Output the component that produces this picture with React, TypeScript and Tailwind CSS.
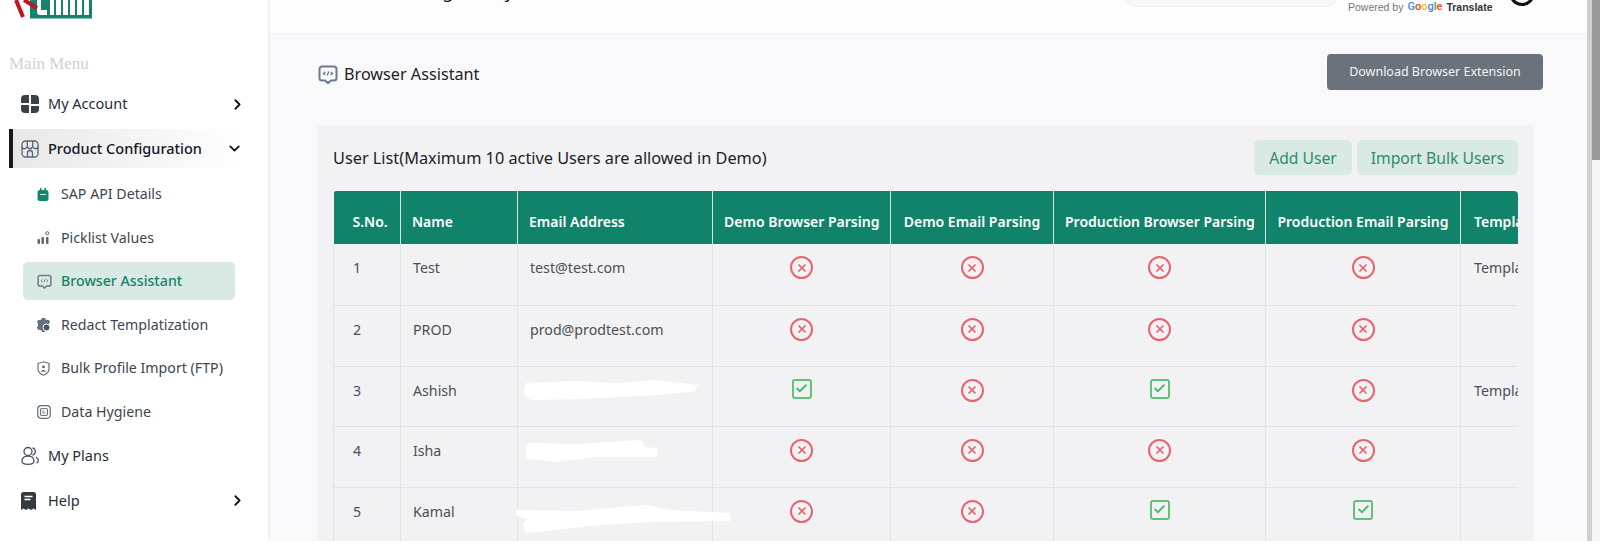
import { Check, ChevronDown, ChevronRight, X } from 'lucide-react';
import type { ReactNode } from 'react';

type Row = { id: number; name: string; email?: string; blob?: 'a' | 'b' | 'c'; flags: boolean[]; template?: string };

const rows: Row[] = [
  { id: 1, name: 'Test', email: 'test@test.com', flags: [false, false, false, false], template: 'Template 1' },
  { id: 2, name: 'PROD', email: 'prod@prodtest.com', flags: [false, false, false, false] },
  { id: 3, name: 'Ashish', blob: 'a', flags: [true, false, true, false], template: 'Template 1' },
  { id: 4, name: 'Isha', blob: 'b', flags: [false, false, false, false] },
  { id: 5, name: 'Kamal', blob: 'c', flags: [false, false, true, true] },
];

const columns = ['Demo Browser Parsing', 'Demo Email Parsing', 'Production Browser Parsing', 'Production Email Parsing'];

function ChatCodeIcon({ className }: { className?: string }) {
  return (
    <svg viewBox="0 0 20 20" className={className} fill="none" stroke="#6b7a8c" strokeWidth="2">
      <path d="M4 2h12a2.5 2.5 0 0 1 2.5 2.5v9A2.5 2.5 0 0 1 16 16h-3l-3 2.6L7 16H4a2.5 2.5 0 0 1-2.5-2.5v-9A2.5 2.5 0 0 1 4 2Z" />
      <path d="M7.2 7.4 5.4 9l1.8 1.6M12.8 7.4 14.6 9l-1.8 1.6M10.8 7 9.2 11" strokeWidth="1.3" />
    </svg>
  );
}

function Status({ ok }: { ok: boolean }) {
  if (ok) {
    return (
      <span className="mx-auto flex h-[20px] w-[20px] items-center justify-center rounded-[3px] border-2 border-[#62c27a] text-[#4fb96c]">
        <Check size={13} strokeWidth={3.5} />
      </span>
    );
  }
  return (
    <span className="mx-auto flex h-[23px] w-[23px] items-center justify-center rounded-full border-2 border-[#e7646f] text-[#e7646f]">
      <X size={12} strokeWidth={3.5} />
    </span>
  );
}

// white scribble the screenshot has over the real addresses
function Redaction({ kind }: { kind: 'a' | 'b' | 'c' }) {
  if (kind === 'a') {
    return (
      <svg viewBox="0 0 175 20" className="absolute top-[13px] left-[6px] h-[20px] w-[175px]">
        <path d="M2 3 50 1l46 2 34-3 44 5-3 7-54 4-60 3-50 1-8-6Z" fill="#fff" />
      </svg>
    );
  }
  if (kind === 'b') {
    return (
      <svg viewBox="0 0 132 22" className="absolute top-[13px] left-[8px] h-[22px] w-[132px]">
        <path d="M2 3 50 4l66-4 3 7 12 1v9l-60 0-40 5-30-3-3-8Z" fill="#fff" />
      </svg>
    );
  }
  return (
    <svg viewBox="0 0 216 30" className="absolute top-[15px] left-[-2px] h-[30px] w-[216px]">
      <path d="M0 7 60 8l70-6 26 5 58 3 1 8-82 1-60 4-50 6-14 1-2-10 5-4-12-3Z" fill="#fff" />
    </svg>
  );
}

function Icon({ name }: { name: string }) {
  switch (name) {
    case 'account':
      return (
        <svg viewBox="0 0 18 18" className="h-[18px] w-[18px]" fill="#3a4048">
          <path d="M4 0h4v8H0V4a4 4 0 0 1 4-4ZM10 0h4a4 4 0 0 1 4 4v5h-8ZM0 10h8v8H4a4 4 0 0 1-4-4ZM10 11h8v3a4 4 0 0 1-4 4h-4Z" />
        </svg>
      );
    case 'store':
      return (
        <svg viewBox="0 0 18 18" className="h-[18px] w-[18px]" fill="none" stroke="#5a6676" strokeWidth="1.3">
          <rect x="1" y="1" width="16" height="16" rx="3.5" />
          <path d="M1 6.5c0 3 4 3 5.3 0 1 3 4.4 3 5.4 0 1.3 3 5.3 3 5.3 0M6.3 1v5.5M11.7 1v5.5M6.5 17v-4a2.5 2.5 0 0 1 5 0v4" />
        </svg>
      );
    case 'sap':
      return (
        <svg viewBox="0 0 12 13" className="h-[13px] w-[12px]" fill="#12856a">
          <rect x="0.5" y="2" width="11" height="11" rx="2.5" />
          <path d="M3 0h1.5v3H3zM7.5 0H9v3H7.5z" />
          <path d="M3 6.5h6" stroke="#d9e9e4" strokeWidth="1" />
        </svg>
      );
    case 'picklist':
      return (
        <svg viewBox="0 0 13 13" className="h-[13px] w-[13px]" fill="#5a6676">
          <rect x="0.5" y="8" width="2.5" height="5" rx="1" />
          <rect x="4.5" y="6" width="2.5" height="7" rx="1" />
          <rect x="9" y="6" width="2.5" height="7" rx="1" />
          <circle cx="10.3" cy="2.3" r="1.6" fill="none" stroke="#5a6676" />
        </svg>
      );
    case 'gear':
      return (
        <svg viewBox="0 0 14 14" className="h-[14px] w-[14px]">
          <path d="M5 0h3l.6 1.5 1.6.6L12 2l1 2-1 1.4V8L13 9.5 12 12l-1.8-.2-1.6.7L8 14H5l-.6-1.5-1.6-.7L1 12 0 9.5 1 8V5.4L0 4l1-2 1.8.1 1.6-.6Z" fill="#66717f" />
          <circle cx="9.5" cy="9.5" r="3.5" fill="#4d5764" stroke="#fff" />
        </svg>
      );
    case 'shield':
      return (
        <svg viewBox="0 0 13 15" className="h-[15px] w-[13px]" fill="none" stroke="#66717f" strokeWidth="1.2">
          <path d="M1 2.5 6.5.8 12 2.5V8c0 3-2.5 5-5.5 6.2C3.5 13 1 11 1 8Z" />
          <circle cx="6.5" cy="5.8" r="1.5" fill="#66717f" stroke="none" />
          <path d="M3.8 10.7c.8-2.4 4.600-2.4 5.400 0Z" fill="#66717f" stroke="none" />
        </svg>
      );
    case 'hygiene':
      return (
        <svg viewBox="0 0 14 14" className="h-[14px] w-[14px]" fill="none" stroke="#66717f" strokeWidth="1.2">
          <rect x="0.7" y="0.7" width="12.6" height="12.6" rx="3.5" />
          <rect x="3.5" y="3.5" width="7" height="7" rx="1.5" />
          <path d="M6 5v3h2.5" strokeWidth="0.9" />
        </svg>
      );
    case 'plans':
      return (
        <svg viewBox="0 0 18 19" className="h-[19px] w-[18px]" fill="none" stroke="#4b5563" strokeWidth="1.3">
          <circle cx="7" cy="5.5" r="4" />
          <path d="M1 15c0-3 2.5-5 6-5s6 2 6 5-2.5 3.3-6 3.3S1 18 1 15Z" />
          <path d="M11.5 1.8a3.7 3.7 0 0 1 0 7.200M15 11c1.500.8 2.300 2.200 2.300 3.800 0 1.200-.7 2-1.800 2.400" />
        </svg>
      );
    case 'help':
      return (
        <svg viewBox="0 0 15 18" className="h-[18px] w-[15px]" fill="#333a44">
          <path d="M2.5 0h10A2.5 2.5 0 0 1 15 2.5V18l-2.5-1.5L10 18l-2.5-1.5L5 18l-2.5-1.5L0 18V2.5A2.5 2.5 0 0 1 2.5 0Z" />
          <path d="M3.5 4.5h8M3.5 7.500h6" stroke="#fff" strokeWidth="1.4" />
        </svg>
      );
    default:
      return <ChatCodeIcon className="h-[15px] w-[15px]" />;
  }
}

function MainItem({ icon, label, chevron }: { icon: string; label: string; chevron?: boolean }) {
  return (
    <div className="flex h-[44px] items-center pr-[22px] pl-[21px]">
      <span className="flex w-[27px] shrink-0 items-center">
        <Icon name={icon} />
      </span>
      <span className="flex-1 text-[14.5px] text-[#252c38]">{label}</span>
      {chevron && <ChevronRight size={17} strokeWidth={2.6} className="text-[#111]" />}
    </div>
  );
}

function SubItem({ icon, label, active }: { icon: string; label: string; active?: boolean }) {
  return (
    <div
      className={`ml-[23px] flex h-[38px] w-[212px] items-center rounded-[5px] pl-[14px] ${
        active ? 'bg-[#d9e9e4] font-medium text-[#12856a]' : 'text-[#3d4552]'
      }`}
    >
      <span className="flex w-[24px] shrink-0 items-center">
        <Icon name={icon} />
      </span>
      {label}
    </div>
  );
}

function Sidebar() {
  return (
    <aside className="flex w-[270px] shrink-0 flex-col border-r-2 border-[#f1f1f2] bg-white">
      <svg viewBox="0 0 92 19" className="h-[19px] w-[92px] shrink-0">
        <rect x="30" y="0" width="62" height="18.5" fill="#12856a" />
        <path d="M37 0h4v10h6v5H40q-3 0-3-3Z" fill="#fff" />
        <path d="M50 0h4v15h-4ZM56 0h5v15h-5ZM63 0h5v15h-5ZM70 0h5v15h-5ZM77 0h5v15h-5ZM84 0h5v15h-5Z" fill="#fff" />
        <path d="M16 0 23 17M24 0 37 8" stroke="#c0141f" strokeWidth="4" fill="none" />
      </svg>
      <div className="pt-[35px] pl-[9px] font-['Liberation_Serif',serif] text-[17px] leading-[20px] text-[#cfd0d2]">Main Menu</div>
      <div className="mt-[8px] font-['Noto_Sans',sans-serif] text-[14.2px]">
        <MainItem icon="account" label="My Account" chevron />
        <div className="mt-[3px] ml-[9px] flex h-[39px] w-[234px] items-center border-l-[4px] border-[#1a1a1a] bg-gradient-to-r from-[#e8e8e8] to-white pl-[8px] font-medium text-[#111827]">
          <span className="flex w-[27px] shrink-0 items-center">
            <Icon name="store" />
          </span>
          <span className="flex-1 text-[14.5px]">Product Configuration</span>
          <ChevronDown size={17} strokeWidth={2.6} className="text-[#111]" />
        </div>
        <div className="mt-[7px] flex flex-col gap-[5.5px]">
          <SubItem icon="sap" label="SAP API Details" />
          <SubItem icon="picklist" label="Picklist Values" />
          <SubItem icon="chat" label="Browser Assistant" active />
          <SubItem icon="gear" label="Redact Templatization" />
          <SubItem icon="shield" label="Bulk Profile Import (FTP)" />
          <SubItem icon="hygiene" label="Data Hygiene" />
        </div>
        <div className="mt-[3px] flex flex-col gap-[1px]">
          <MainItem icon="plans" label="My Plans" />
          <MainItem icon="help" label="Help" chevron />
        </div>
      </div>
    </aside>
  );
}

function Header() {
  return (
    <header className="flex h-[35px] shrink-0 items-end overflow-hidden border-b-2 border-[#f3f3f5] bg-[#fdfdfd]">
      <div className="flex-1 pb-[30px] pl-[60px] font-['Noto_Sans',sans-serif] text-[18px] leading-[24px] whitespace-nowrap text-[#111]">
        Good Morning, Henry
      </div>
      <div className="mb-[26px] h-[40px] w-[216px] rounded-[14px] border border-[#eeeeee] bg-[#f7f8f8]" />
      <div className="mb-[19px] ml-[9px] flex w-[161px] items-center gap-[4px] font-['Liberation_Sans',sans-serif] text-[10.5px] leading-[14px] text-[#777]">
        Powered by
        <span className="font-['Roboto',sans-serif] text-[11px] font-medium">
          <span className="text-[#4285f4]">G</span>
          <span className="text-[#ea4335]">o</span>
          <span className="text-[#fbbc05]">o</span>
          <span className="text-[#4285f4]">g</span>
          <span className="text-[#34a853]">l</span>
          <span className="text-[#ea4335]">e</span>
        </span>
        <span className="text-[10.5px] font-bold text-[#333]">Translate</span>
      </div>
      <div className="mr-[52px] mb-[27px] h-[26px] w-[26px] rounded-full border-[3px] border-[#111]" />
    </header>
  );
}

function Th({ children, className }: { children: ReactNode; className?: string }) {
  return <th className={`border-r border-[#d8e6e1] px-[11px] pt-[7px] text-[14px] font-semibold whitespace-nowrap ${className ?? ''}`}>{children}</th>;
}

function UserTable() {
  return (
    <div className="w-[1185px] overflow-hidden rounded-t-[4px]">
      <table className="w-[1335px] table-fixed border-collapse font-['Noto_Sans',sans-serif] text-[14.2px] text-[#4a4f57]">
        <colgroup>
          <col className="w-[67px]" />
          <col className="w-[117px]" />
          <col className="w-[195px]" />
          <col className="w-[178px]" />
          <col className="w-[163px]" />
          <col className="w-[212px]" />
          <col className="w-[195px]" />
          <col className="w-[208px]" />
        </colgroup>
        <thead>
          <tr className="h-[53px] bg-[#11836a] text-white">
            <Th className="pl-[19px] text-left">S.No.</Th>
            <Th className="text-left">Name</Th>
            <Th className="text-left">Email Address</Th>
            {columns.map((col) => (
              <Th key={col} className="text-center">
                {col}
              </Th>
            ))}
            <Th className="border-r-0 pl-[13px] text-left">Template</Th>
          </tr>
        </thead>
        <tbody>
          {rows.map((row) => (
            <tr key={row.id} className={`border-b border-[#e1e2e6] align-top ${row.id === 3 ? 'h-[60px]' : 'h-[61px]'}`}>
              <td className="border-x border-[#e1e2e6] pt-[13px] pl-[19px] leading-[22px]">{row.id}</td>
              <td className="border-r border-[#e1e2e6] pt-[13px] pl-[12px] leading-[22px]">{row.name}</td>
              <td className="relative border-r border-[#e1e2e6] pt-[13px] pl-[12px] leading-[22px]">
                {row.email}
                {row.blob && <Redaction kind={row.blob} />}
              </td>
              {row.flags.map((ok, i) => (
                <td key={i} className="border-r border-[#e1e2e6] pt-[12px]">
                  <Status ok={ok} />
                </td>
              ))}
              <td className="pt-[13px] pl-[13px] leading-[22px] whitespace-nowrap">{row.template}</td>
            </tr>
          ))}
        </tbody>
      </table>
    </div>
  );
}

export default function App() {
  return (
    <div className="h-[545px] w-[1600px] overflow-hidden bg-white">
      <div className="flex h-[541px] overflow-hidden">
        <Sidebar />
        <main className="flex min-w-0 flex-1 flex-col bg-[#f9f9fb]">
          <Header />
          <div className="flex items-start justify-between pt-[19px] pr-[44px] pl-[48px]">
            <div className="flex items-center gap-[6px] pt-[8px] font-['Noto_Sans',sans-serif] text-[16.2px] text-[#1d2128]">
              <ChatCodeIcon className="h-[21px] w-[20px]" />
              Browser Assistant
            </div>
            <button className="h-[36px] w-[216px] rounded-[4px] bg-[#6b727c] font-['Noto_Sans',sans-serif] text-[12.5px] text-[#f3f3f3]">
              Download Browser Extension
            </button>
          </div>
          <section className="mt-[35px] ml-[47px] w-[1217px] flex-1 bg-[#f2f2f5] px-[16px] pt-[15px]">
            <div className="mb-[16px] flex h-[35px] items-center justify-between font-['Noto_Sans',sans-serif]">
              <h2 className="pt-[2px] text-[16.3px] text-[#1d2128]">User List(Maximum 10 active Users are allowed in Demo)</h2>
              <div className="flex gap-[5px] text-[15.7px] text-[#2c8d74]">
                <button className="h-[35px] w-[98px] rounded-[5px] bg-[#d9e9e4] pt-[2px]">Add User</button>
                <button className="h-[35px] w-[161px] rounded-[5px] bg-[#d9e9e4] pt-[2px]">Import Bulk Users</button>
              </div>
            </div>
            <UserTable />
          </section>
        </main>
        <div className="flex w-[13px] shrink-0 border-l-[5px] border-[#cfcfcf] bg-[#f7f7f7]">
          <div className="h-[160px] w-full bg-[#9b9b9b]" />
        </div>
      </div>
    </div>
  );
}
